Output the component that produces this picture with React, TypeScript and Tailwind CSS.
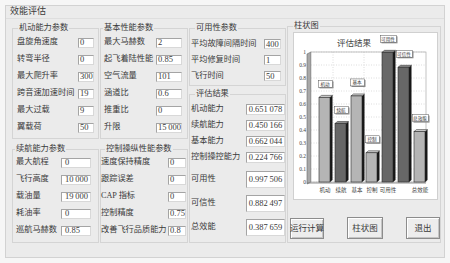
import React from 'react'

const FONT = "font-['Liberation_Serif','Noto_Sans_CJK_SC',serif]"
const BOX = 'bg-white border border-[#a4a4a4] border-r-[#d8d8d8] border-b-[#d8d8d8] flex items-center px-[1px] leading-none text-[8.5px] whitespace-nowrap overflow-hidden'

type RowProps = { label: string; value: string; labelClass: string; boxClass: string; rowClass: string }

function Row({ label, value, labelClass, boxClass, rowClass }: RowProps) {
  return (
    <div className={`flex items-center ${rowClass}`}>
      <span className={`${labelClass} whitespace-nowrap overflow-visible`}>{label}</span>
      <span className={`${BOX} ${boxClass}`}>{value}</span>
    </div>
  )
}

function Group({ title, legendClass, className, children }: { title: string; legendClass: string; className: string; children: React.ReactNode }) {
  return (
    <fieldset className={`border border-[#d4d4d4] p-0 m-0 min-w-0 ${className}`}>
      <legend className={`px-[1px] leading-[10px] text-[8.2px] ${legendClass}`}>{title}</legend>
      {children}
    </fieldset>
  )
}

const bars = [
  { name: '机动', v: 0.651078, dark: false, x: 26, axis: true },
  { name: '续航', v: 0.450166, dark: true, x: 42, axis: true },
  { name: '基本', v: 0.662044, dark: false, x: 58, axis: true },
  { name: '控制', v: 0.224766, dark: false, x: 73, axis: true },
  { name: '可用性', v: 0.997506, dark: true, x: 89, axis: true },
  { name: '可信性', v: 0.882497, dark: true, x: 105, axis: false },
  { name: '总效能', v: 0.387659, dark: false, x: 121, axis: true },
]

function Chart() {
  const base = 150
  const scale = 130
  const ticks = [0, 0.1, 0.2, 0.3, 0.4, 0.5, 0.6, 0.7, 0.8, 0.9, 1]
  return (
    <svg width="145" height="168" viewBox="0 0 145 168" className="block">
      <rect x="0.5" y="0.5" width="144" height="167" fill="#fff" stroke="#d0d0d0" />
      <text x="61" y="14" fontSize="8.5" textAnchor="middle" fill="#444" fontFamily="Liberation Serif, Noto Sans CJK SC, serif">评估结果</text>
      {/* left wall */}
      <polygon points="14,22 18,20 18,150 14,152" fill="#a8a8a8" stroke="#666" strokeWidth="0.6" />
      <rect x="18" y="20" width="115" height="130" fill="#fff" stroke="#9a9a9a" strokeWidth="0.6" />
      {ticks.map(t => (
        <g key={t}>
          <line x1="18" x2="133" y1={base - t * scale} y2={base - t * scale} stroke="#bbb" strokeWidth="0.5" strokeDasharray="1 1.5" />
          <text x="13" y={base - t * scale + 2} fontSize="5.5" textAnchor="end" fill="#444" fontFamily="Liberation Serif, serif">{t === 0 ? '0' : t === 1 ? '1' : String(t)}</text>
        </g>
      ))}
      {[40, 71, 103].map(x => (
        <line key={x} x1={x} x2={x} y1="20" y2="150" stroke="#bbb" strokeWidth="0.5" strokeDasharray="1 1.5" />
      ))}
      <line x1="14" x2="133" y1="151" y2="151" stroke="#777" strokeWidth="0.8" />
      {bars.map(b => {
        const top = base - b.v * scale
        const front = b.dark ? '#676767' : '#b5b5b5'
        const topFace = b.dark ? '#8c8c8c' : '#d2d2d2'
        const lw = b.name.length > 2 ? 16 : 14
        const lx = b.x + (b.name.length > 2 ? -1.5 : -0.5)
        return (
          <g key={b.name}>
            <polygon points={`${b.x + 11},${top} ${b.x + 13.5},${top - 2} ${b.x + 13.5},${base - 2} ${b.x + 11},${base}`} fill="#161616" />
            <polygon points={`${b.x},${top} ${b.x + 2.5},${top - 2} ${b.x + 13.5},${top - 2} ${b.x + 11},${top}`} fill={topFace} stroke="#222" strokeWidth="0.5" />
            <rect x={b.x} y={top} width="11" height={b.v * scale} fill={front} stroke="#2a2a2a" strokeWidth="0.6" />
            <rect x={lx + 1} y={top - 16} width={lw} height="7" fill="#8a8a8a" />
            <rect x={lx} y={top - 17} width={lw} height="7" fill="#fff" stroke="#555" strokeWidth="0.5" />
            <text x={b.x + 6} y={top - 11.7} fontSize="4.6" textAnchor="middle" fill="#333" fontFamily="Noto Sans CJK SC, sans-serif">{b.name}</text>
            {b.axis && (
              <text x={b.x + 6} y="160" fontSize="5.5" textAnchor="middle" fill="#444" fontFamily="Noto Sans CJK SC, sans-serif">{b.name}</text>
            )}
          </g>
        )
      })}
    </svg>
  )
}

function Button({ label, className }: { label: string; className: string }) {
  return (
    <div className={`flex items-center justify-center bg-[#ededed] border border-[#8c8c8c] shadow-[inset_1px_1px_0_#fff,inset_-1px_-1px_0_#c4c4c4] text-[8.5px] whitespace-nowrap ${className}`}>
      {label}
    </div>
  )
}

export default function App() {
  return (
    <div className={`w-[450px] h-[263px] bg-[#f6f6f6] pt-[5px] pl-[5px] text-[#3a3a3a] text-[8.2px] ${FONT}`}>
      <div className="w-[440px] h-[253px] bg-[#ebebeb] border border-[#d2d2d2] flex flex-col">
        <div className="h-[13px] pl-[4px] flex items-center text-[9px] border-b border-[#dedede]">效能评估</div>
        <div className="flex pl-[6px] pt-[4px] gap-[1px]">
          {/* column 1 */}
          <div className="w-[87px] flex flex-col gap-[5px]">
            <Group title="机动能力参数" legendClass="ml-[5px]" className="h-[116px]">
              <div className="pl-[4px] pt-[1px]">
                {[['盘旋角速度', '0'], ['转弯半径', '0'], ['最大爬升率', '300'], ['跨音速加速时间', '19'], ['最大过载', '9'], ['翼载荷', '50']].map(([l, v]) => (
                  <Row key={l} label={l} value={v} rowClass="h-[17px]" labelClass="w-[61px]" boxClass="w-[16px] h-[10px]" />
                ))}
              </div>
            </Group>
            <Group title="续航能力参数" legendClass="ml-[2px]" className="h-[99px]">
              <div className="pl-[3px]">
                {[['最大航程', '0'], ['飞行高度', '10\u2009000'], ['载油量', '19\u2009000'], ['耗油率', '0'], ['巡航马赫数', '0.85']].map(([l, v]) => (
                  <Row key={l} label={l} value={v} rowClass="h-[17px]" labelClass="w-[45px]" boxClass="w-[30px] h-[10px] pl-[3px]" />
                ))}
              </div>
            </Group>
          </div>
          {/* column 2 */}
          <div className="w-[88px] flex flex-col gap-[5px]">
            <Group title="基本性能参数" legendClass="ml-[2px]" className="h-[116px]">
              <div className="pl-[3px] pt-[1px]">
                {[['最大马赫数', '2'], ['起飞着陆性能', '0.85'], ['空气流量', '101'], ['涵道比', '0.6'], ['推重比', '0'], ['升限', '15\u2009000']].map(([l, v]) => (
                  <Row key={l} label={l} value={v} rowClass="h-[17px]" labelClass="w-[52px]" boxClass="w-[26px] h-[10px]" />
                ))}
              </div>
            </Group>
            <Group title="控制操纵性能参数" legendClass="ml-[4px]" className="h-[99px]">
              <div className="pl-0">
                {[['速度保持精度', '0'], ['跟踪误差', '0'], ['CAP 指标', '0'], ['控制精度', '0.75'], ['改善飞行品质能力', '0.8']].map(([l, v]) => (
                  <Row key={l} label={l} value={v} rowClass="h-[17px]" labelClass="w-[67px]" boxClass="w-[18px] h-[10px]" />
                ))}
              </div>
            </Group>
          </div>
          {/* column 3 */}
          <div className="w-[97px] flex flex-col gap-[3px]">
            <Group title="可用性参数" legendClass="ml-[5px]" className="h-[63px]">
              <div className="pl-[1px] pt-[3px]">
                {[['平均故障间隔时间', '400'], ['平均修复时间', '1'], ['飞行时间', '50']].map(([l, v]) => (
                  <Row key={l} label={l} value={v} rowClass="h-[16px]" labelClass="w-[73px]" boxClass="w-[17px] h-[10px]" />
                ))}
              </div>
            </Group>
            <Group title="评估结果" legendClass="ml-[5px]" className="h-[154px]">
              <div className="pl-[1px] pt-[2px]">
                {[['机动能力', '0.651\u2009078'], ['续航能力', '0.450\u2009166'], ['基本能力', '0.662\u2009044'], ['控制操控能力', '0.224\u2009766']].map(([l, v]) => (
                  <Row key={l} label={l} value={v} rowClass="h-[16px]" labelClass="w-[55px]" boxClass="w-[39px] h-[11px] justify-center" />
                ))}
                <div className="mt-[2px]">
                  {[['可用性', '0.997\u2009506'], ['可信性', '0.882\u2009497'], ['总效能', '0.387\u2009659']].map(([l, v]) => (
                    <Row key={l} label={l} value={v} rowClass="h-[24px]" labelClass="w-[55px]" boxClass="w-[39px] h-[17px] justify-center" />
                  ))}
                </div>
              </div>
            </Group>
          </div>
          {/* column 4 */}
          <div className="w-[154px] -mt-[2px]">
            <Group title="柱状图" legendClass="ml-[5px]" className="h-[222px]">
              <div className="pl-[5px] pt-[1px]">
                <Chart />
              </div>
              <div className="flex items-center justify-between pl-[2px] mt-[17px]">
                <Button label="运行计算" className="w-[34px] h-[21px]" />
                <Button label="柱状图" className="w-[36px] h-[22px]" />
                <Button label="退出" className="w-[34px] h-[22px]" />
              </div>
            </Group>
          </div>
        </div>
      </div>
    </div>
  )
}
